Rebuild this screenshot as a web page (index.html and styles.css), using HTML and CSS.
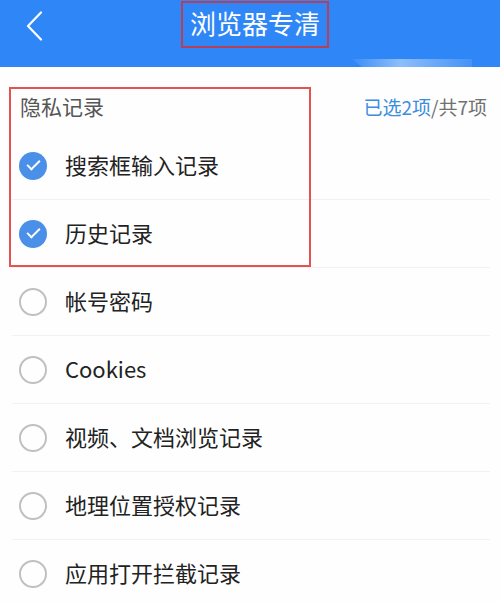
FILE: index.html
```html
<!DOCTYPE html>
<html>
  <head>
    <title>浏览器专清</title>
    <link rel="stylesheet" href="styles.css">
  </head>
  <body>
    <div id="topbar">
      <div class="back">
        <svg width="18" height="30" viewBox="0 0 18 30">
          <path d="M16 1.5 L3 15 L16 28.5" fill="none" stroke="#fff" stroke-width="2.2" stroke-linecap="round" stroke-linejoin="round" />
        </svg>
      </div>
      <h1><span class="title-box">浏览器专清</span></h1>
      <div></div>
    </div>

    <div id="section">
      <span class="section-name">隐私记录</span>
      <span class="count"><span class="picked">已选2项</span>/共7项</span>
    </div>

    <ul id="list">
      <li class="item checked"><span class="tick"></span><span class="label">搜索框输入记录</span></li>
      <li class="item checked"><span class="tick"></span><span class="label">历史记录</span></li>
      <li class="item"><span class="tick"></span><span class="label">帐号密码</span></li>
      <li class="item"><span class="tick"></span><span class="label">Cookies</span></li>
      <li class="item"><span class="tick"></span><span class="label">视频、文档浏览记录</span></li>
      <li class="item"><span class="tick"></span><span class="label">地理位置授权记录</span></li>
      <li class="item"><span class="tick"></span><span class="label">应用打开拦截记录</span></li>
    </ul>

    <div class="mark"></div>
  </body>
</html>
```

FILE: styles.css
```css
body {
  margin: 0;
  background: #fefefe;
  font-family: "Noto Sans CJK SC", "Noto Sans", sans-serif;
  position: relative;
}

#topbar {
  position: relative;
  height: 67px;
  background: #2f86f6;
  display: grid;
  grid-template-columns: 1fr auto 1fr;
  align-items: center;
}

#topbar::after {
  content: "";
  position: absolute;
  left: 352px;
  bottom: 0;
  width: 120px;
  height: 8px;
  background: linear-gradient(90deg, rgba(255, 255, 255, 0.05), rgba(220, 235, 255, 0.55) 40%, rgba(255, 255, 255, 0.1));
  clip-path: polygon(0 0, 100% 0, 100% 100%, 8% 100%);
}

.back {
  padding-left: 25px;
  height: 30px;
  margin-top: -16px;
}

h1 {
  margin: 0;
  margin-top: -18px;
  padding-left: 10px;
  font-weight: normal;
  font-size: 26px;
  color: white;
}

.title-box {
  display: inline-block;
  border: 2px solid #b5405a;
  padding: 0 7px;
  height: 43px;
  line-height: 40px;
}

#section {
  height: 65px;
  box-sizing: border-box;
  padding: 27px 13px 0 20px;
  display: flex;
  justify-content: space-between;
  align-items: baseline;
  line-height: 24px;
}

.section-name {
  font-size: 21px;
  color: #555;
}

.count {
  font-size: 19px;
  color: #707070;
}

.picked {
  color: #3b8de0;
}

#list {
  list-style: none;
  margin: 0;
  padding: 0;
}

.item {
  height: 68px;
  box-sizing: border-box;
  margin: 0 10px 0 12px;
  padding-left: 7px;
  border-bottom: 1px solid #f1f1f1;
  display: flex;
  align-items: center;
  gap: 18px;
  font-size: 22px;
  color: #222;
}

.label {
  margin-top: -3px;
}

.tick {
  width: 28px;
  height: 28px;
  box-sizing: border-box;
  border-radius: 50%;
  border: 2px solid #c0c0c0;
  flex-shrink: 0;
  position: relative;
}

.checked .tick {
  border: none;
  background: #4a90e8;
}

.checked .tick::after {
  content: "";
  position: absolute;
  left: 8px;
  top: 8px;
  width: 11px;
  height: 5px;
  border-left: 2px solid white;
  border-bottom: 2px solid white;
  transform: rotate(-45deg);
}

.mark {
  position: absolute;
  left: 9px;
  top: 87px;
  width: 302px;
  height: 180px;
  box-sizing: border-box;
  border: 2px solid #e4534f;
}
```
